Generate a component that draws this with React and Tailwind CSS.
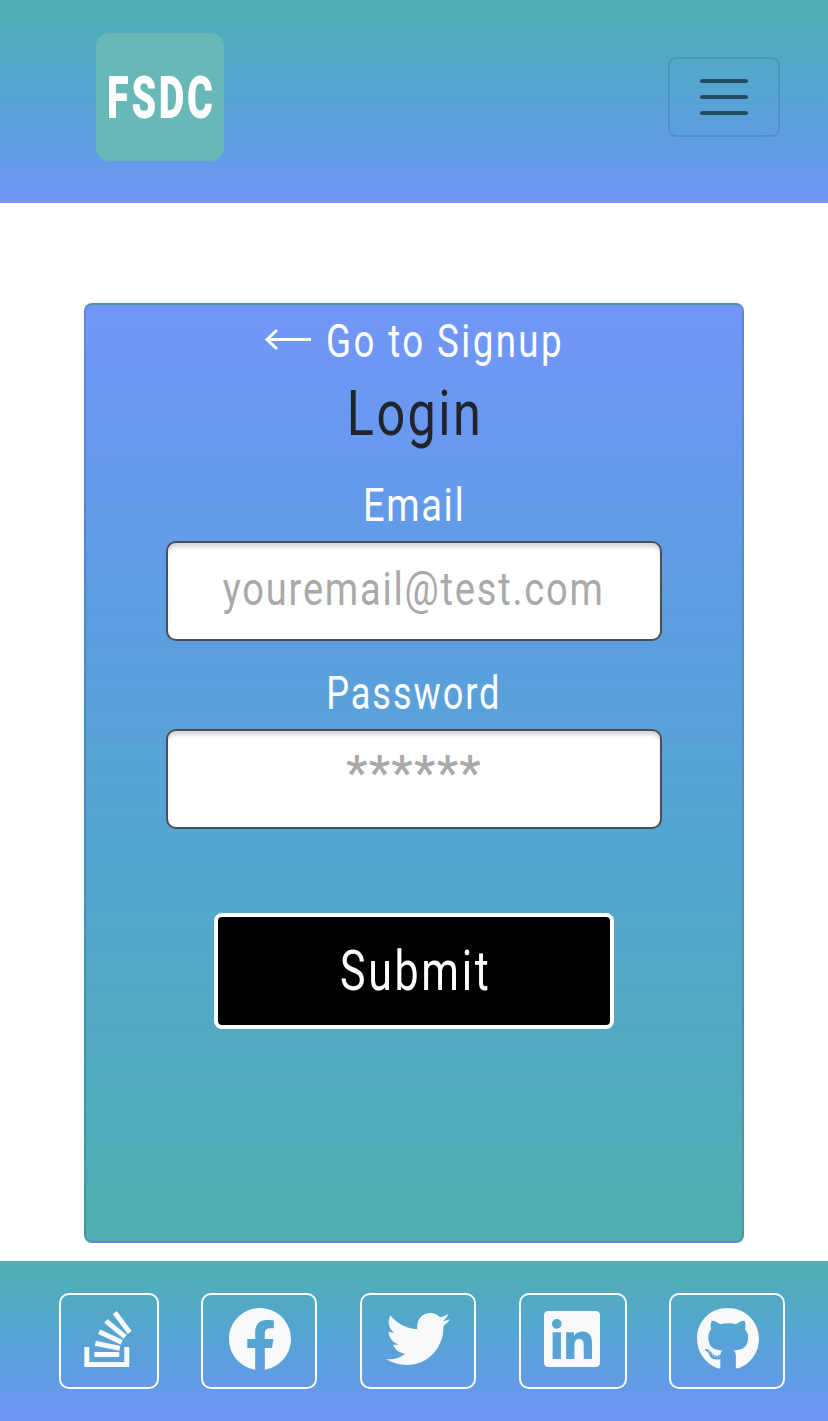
import React from "react";
import { FaStackOverflow, FaFacebook, FaTwitter, FaLinkedin, FaGithub } from "react-icons/fa";

const socials = [
  { name: "Stack Overflow", Icon: FaStackOverflow, box: "ml-[59px] w-[100px] pr-0.5", icon: "w-12" },
  { name: "Facebook", Icon: FaFacebook, box: "ml-[42px] w-[116px] pl-0.5", icon: "w-16" },
  { name: "Twitter", Icon: FaTwitter, box: "ml-[43px] w-[116px]", icon: "w-16" },
  { name: "LinkedIn", Icon: FaLinkedin, box: "ml-[43px] w-[108px] pr-0.5", icon: "w-14" },
  { name: "GitHub", Icon: FaGithub, box: "ml-[42px] w-[116px] pl-0.5", icon: "w-16" },
];

function Header() {
  return (
    <header className="flex h-[203px] items-start justify-between bg-[linear-gradient(to_bottom,#50afb0_0%,#54a6cf_40%,#5f9de2_70%,#7196f8_100%)] pr-12 pl-24">
      <div className="mt-[33px] flex h-32 w-32 items-center justify-center rounded-[14px] bg-[#69b8b8]">
        <span className="inline-block scale-x-[0.67] pl-1 text-[59px] leading-none font-black tracking-[4px] text-white">
          FSDC
        </span>
      </div>
      <button
        aria-label="Menu"
        className="mt-[57px] flex h-20 w-28 flex-col items-center justify-center gap-3 rounded-lg border-2 border-black/10"
      >
        <span className="h-1 w-12 rounded-full bg-[#234c62]" />
        <span className="h-1 w-12 rounded-full bg-[#234c62]" />
        <span className="h-1 w-12 rounded-full bg-[#234c62]" />
      </button>
    </header>
  );
}

function LoginCard() {
  return (
    <main className="mx-auto mt-[100px] flex h-[940px] w-[660px] flex-col items-center rounded-lg border-2 border-black/[0.125] bg-[linear-gradient(to_bottom,#7296f9_0%,#5e9de3_30%,#53a6cf_60%,#50afb0_100%)]">
      <a className="mt-[3px] flex h-16 w-[298px] items-center text-[47px] text-white" href="#signup">
        <svg className="mr-[14px] h-6 w-[47px] shrink-0" viewBox="0 0 47 24" fill="none" stroke="currentColor" strokeWidth="3">
          <path d="M46 11.5H2M12 2L2 11.5l10 9.5" />
        </svg>
        <span className="w-[236px] origin-left scale-x-[0.78] leading-none font-[450] tracking-[3.1px] whitespace-nowrap">
          Go to Signup
        </span>
      </a>
      <h1 className="mt-1 flex h-[74px] items-center text-[63px] leading-none text-[#212529]">
        <span className="inline-block scale-x-[0.8] pl-0.5 font-[450] tracking-[3px]">Login</span>
      </h1>
      <label className="mt-[23px] flex h-[62px] items-center text-[47px] leading-none text-white">
        <span className="inline-block scale-x-[0.81] font-[450] tracking-[2px]">Email</span>
      </label>
      <div className="mt-[6px] flex h-[100px] w-[496px] items-center justify-center rounded-[10px] border-2 border-[#495057] bg-white pb-1.5 text-[47px] text-[#a9a9a9] shadow-[inset_0_5px_5px_-2px_rgba(0,0,0,0.2)]">
        <span className="inline-block scale-x-[0.81] leading-none font-[450] tracking-[2.2px]">youremail@test.com</span>
      </div>
      <label className="mt-[20px] flex h-[62px] items-center text-[47px] leading-none text-white">
        <span className="inline-block scale-x-[0.77] font-[450] tracking-[2.5px]">Password</span>
      </label>
      <div className="mt-[6px] flex h-[100px] w-[496px] items-center justify-center rounded-[10px] border-2 border-[#495057] bg-white pb-3 text-[48px] text-[#a9a9a9] shadow-[inset_0_5px_5px_-2px_rgba(0,0,0,0.2)]">
        <span className="inline-block leading-none font-medium tracking-[1.4px]">******</span>
      </div>
      <button className="mt-[84px] flex h-[116px] w-[400px] items-center justify-center rounded-lg border-4 border-white bg-black text-[55px] leading-none text-white">
        <span className="inline-block scale-x-[0.78] pl-1 font-[450] tracking-[3.5px]">Submit</span>
      </button>
    </main>
  );
}

function Footer() {
  return (
    <footer className="mt-[18px] flex h-40 items-start bg-[linear-gradient(to_bottom,#50afb0_0%,#54a6cf_40%,#5f9de2_70%,#7196f8_100%)] pt-8">
      {socials.map(({ name, Icon, box, icon }) => (
        <a
          key={name}
          aria-label={name}
          href="#social"
          className={`flex h-24 shrink-0 items-start justify-center rounded-[10px] border-2 border-[#f8f9fa] pt-3 text-[#f8f9fa] ${box}`}
        >
          <Icon className={`h-16 ${icon}`} />
        </a>
      ))}
    </footer>
  );
}

export default function App() {
  return (
    <div className="h-[1421px] w-[828px] overflow-hidden bg-white font-['Roboto',sans-serif]">
      <Header />
      <LoginCard />
      <Footer />
    </div>
  );
}
